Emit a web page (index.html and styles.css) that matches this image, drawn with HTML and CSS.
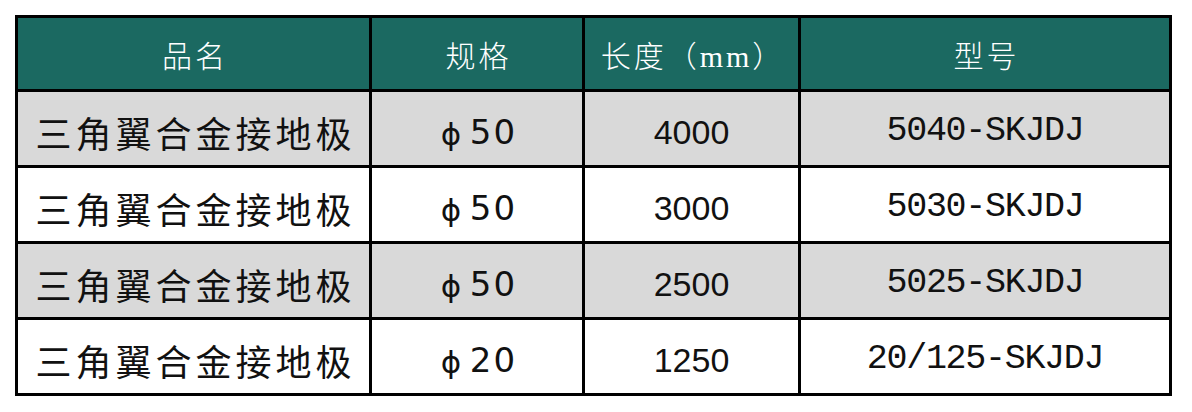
FILE: index.html
```html
<!DOCTYPE html>
<html lang="zh-CN">
<head>
<meta charset="utf-8">
<title>三角翼合金接地极</title>
<link rel="stylesheet" href="styles.css">
</head>
<body>
<div class="table">
  <div class="cell head">品名</div>
  <div class="cell head">规格</div>
  <div class="cell head">长度（mm）</div>
  <div class="cell head">型号</div>

  <div class="cell gray name">三角翼合金接地极</div>
  <div class="cell gray spec"><span class="phi">ϕ</span>50</div>
  <div class="cell gray len">4000</div>
  <div class="cell gray model">5040-SKJDJ</div>

  <div class="cell name">三角翼合金接地极</div>
  <div class="cell spec"><span class="phi">ϕ</span>50</div>
  <div class="cell len">3000</div>
  <div class="cell model">5030-SKJDJ</div>

  <div class="cell gray name">三角翼合金接地极</div>
  <div class="cell gray spec"><span class="phi">ϕ</span>50</div>
  <div class="cell gray len">2500</div>
  <div class="cell gray model">5025-SKJDJ</div>

  <div class="cell name">三角翼合金接地极</div>
  <div class="cell spec"><span class="phi">ϕ</span>20</div>
  <div class="cell len">1250</div>
  <div class="cell model">20/125-SKJDJ</div>
</div>
</body>
</html>
```

FILE: styles.css
```css
html, body {
  margin: 0;
  padding: 0;
  background: #ffffff;
}

.table {
  margin: 15px 0 0 15px;
  width: max-content;
  display: grid;
  grid-template-columns: 351px 210px 213px 368px;
  grid-template-rows: 71px 73px 73px 73px 73px;
  gap: 3px;
  padding: 3px;
  background: #000000;
}

.cell {
  background: #ffffff;
  color: #111111;
  display: flex;
  align-items: center;
  justify-content: center;
  line-height: 1;
  padding-top: 6px;
  box-sizing: border-box;
  white-space: nowrap;
}

.cell.gray {
  background: #d9d9d9;
}

.cell.head {
  background: #1b6961;
  color: #ffffff;
  font-family: "Liberation Serif", "Noto Sans CJK SC", serif;
  font-weight: 300;
  font-size: 30px;
  letter-spacing: 3px;
  padding-left: 3px;
}

.name {
  font-family: "Noto Sans CJK SC", sans-serif;
  font-size: 36px;
  letter-spacing: 4px;
  padding-left: 4px;
}

.spec {
  font-family: "DejaVu Sans", sans-serif;
  font-size: 34px;
  letter-spacing: 2px;
  padding-left: 4px;
}

.phi {
  display: inline-block;
  width: 29px;
  font-size: 31px;
  letter-spacing: 0;
  text-align: left;
  position: relative;
  top: 3px;
}

.len {
  font-family: "Liberation Sans", sans-serif;
  font-size: 34px;
}

.model {
  font-family: "Liberation Mono", monospace;
  font-size: 35px;
  font-weight: 400;
  letter-spacing: -1.3px;
}
```
